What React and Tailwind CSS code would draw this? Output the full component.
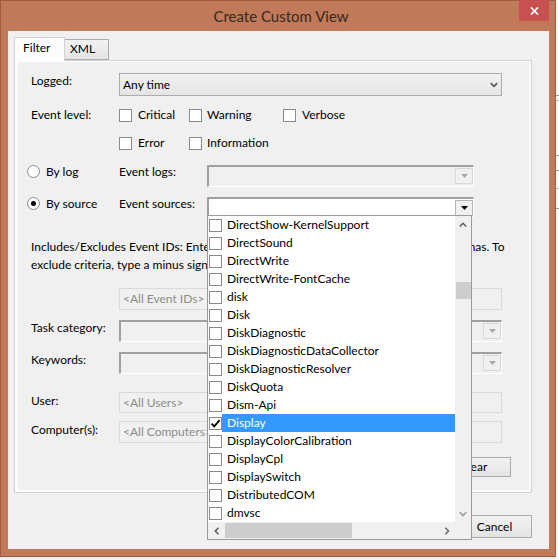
import React from "react";

const ITEMS = [
  "DirectShow-KernelSupport",
  "DirectSound",
  "DirectWrite",
  "DirectWrite-FontCache",
  "disk",
  "Disk",
  "DiskDiagnostic",
  "DiskDiagnosticDataCollector",
  "DiskDiagnosticResolver",
  "DiskQuota",
  "Dism-Api",
  "Display",
  "DisplayColorCalibration",
  "DisplayCpl",
  "DisplaySwitch",
  "DistributedCOM",
  "dmvsc",
];

function Check({ checked }) {
  return (
    <span className="flex h-[13px] w-[13px] shrink-0 items-center justify-center border border-[#8a8a8a] bg-white">
      {checked && (
        <svg width="11" height="11" viewBox="0 0 11 11">
          <path d="M1.6 5.6 L4.2 8.4 L9.6 2.2" fill="none" stroke="#000" strokeWidth="1.9" />
        </svg>
      )}
    </span>
  );
}

function Radio({ on }) {
  return (
    <span className="mt-[1px] flex h-[13px] w-[13px] shrink-0 items-center justify-center rounded-full border border-[#8a8a8a] bg-white">
      {on && <span className="h-[5px] w-[5px] rounded-full bg-black" />}
    </span>
  );
}

function Tri({ dark }) {
  return (
    <svg width="7" height="4" viewBox="0 0 7 4">
      <path d="M0 0H7L3.5 4Z" fill={dark ? "#000" : "#a8a8a8"} />
    </svg>
  );
}

function Label({ children }) {
  return <div className="w-[88px] shrink-0 leading-[16px]">{children}</div>;
}

function Sunken({ white, dark, width, height }) {
  return (
    <div
      className={
        "flex shrink-0 items-start justify-end border-b border-l-2 border-r border-t-2 border-b-white border-l-[#a0a0a0] border-r-white border-t-[#a0a0a0] pt-[1px] " +
        (white ? "bg-white" : "bg-[#f0f0f0]")
      }
      style={{ width, height }}
    >
      <div
        className={
          "flex h-[16px] w-[18px] items-center justify-center border bg-[#f0f0f0] " +
          (dark ? "border-[#b5b5b5]" : "border-[#d8d8d8]")
        }
      >
        <Tri dark={dark} />
      </div>
    </div>
  );
}

function TextBox({ text, height }) {
  return (
    <div
      className="flex w-[383px] shrink-0 items-center border border-[#d9d9d9] bg-[#f0f0f0] pl-[3px] text-[#8c8c8c]"
      style={{ height }}
    >
      {text}
    </div>
  );
}

function Button({ children, h }) {
  return (
    <div
      className="flex w-[75px] shrink-0 items-center justify-center border border-[#acacac] bg-linear-to-b from-[#f2f2f2] to-[#e4e4e4]"
      style={{ height: h }}
    >
      {children}
    </div>
  );
}

function Chevron({ dir, color }) {
  const d = {
    up: "M0.8 4.5 L4 1.3 L7.2 4.5",
    down: "M0.8 1.3 L4 4.5 L7.2 1.3",
    left: "M4.5 0.8 L1.3 4 L4.5 7.2",
    right: "M1.3 0.8 L4.5 4 L1.3 7.2",
  }[dir];
  const vert = dir === "up" || dir === "down";
  return (
    <svg width={vert ? 8 : 6} height={vert ? 6 : 8} viewBox={vert ? "0 0 8 6" : "0 0 6 8"}>
      <path d={d} fill="none" stroke={color} strokeWidth="1.6" />
    </svg>
  );
}

function SourceList() {
  return (
    <div className="absolute left-[207px] top-[215px] z-20 flex h-[325px] w-[265px] flex-col border border-[#9a9a9a] bg-white">
      <div className="flex h-[306px]">
        <div className="flex w-[247px] flex-col overflow-hidden">
          {ITEMS.map((t) => {
            const sel = t === "Display";
            return (
              <div key={t} className="flex h-[18px] shrink-0 items-center pl-[1px]">
                <Check checked={sel} />
                <span
                  className={
                    "flex h-full grow items-center whitespace-nowrap pl-[5px] " +
                    (sel ? "bg-[#3399ff] text-white" : "")
                  }
                >
                  {t}
                </span>
              </div>
            );
          })}
        </div>
        <div className="flex w-[16px] flex-col bg-[#f0f0f0]">
          <div className="flex h-[17px] items-center justify-center">
            <Chevron dir="up" color="#606060" />
          </div>
          <div className="h-[49px]" />
          <div className="ml-[1px] h-[17px] w-[15px] bg-[#cdcdcd]" />
          <div className="grow" />
          <div className="flex h-[17px] items-center justify-center">
            <Chevron dir="down" color="#9c9c9c" />
          </div>
        </div>
      </div>
      <div className="flex h-[17px]">
        <div className="flex w-[247px] items-center bg-[#f0f0f0]">
          <div className="flex h-full w-[17px] items-center justify-center">
            <Chevron dir="left" color="#606060" />
          </div>
          <div className="h-[15px] w-[127px] bg-[#cdcdcd]" />
          <div className="grow" />
          <div className="flex h-full w-[17px] items-center justify-center">
            <Chevron dir="right" color="#707070" />
          </div>
        </div>
        <div className="w-[16px] bg-[#f0f0f0]" />
      </div>
    </div>
  );
}

export default function App() {
  return (
    <div className="relative flex h-[560px] w-[559px] bg-[#f2f2f2] font-['Lato',sans-serif] text-[12px] text-black">
      <div className="relative flex h-[557px] w-[556px] shrink-0 flex-col border border-[#9c5d42] bg-[#c07a5a]">
        <div className="flex h-[30px] shrink-0 items-center justify-center pl-[6px] text-[15px] text-[#3a2820]">
          Create Custom View
        </div>
        <div className="absolute right-[6px] top-[-1px] flex h-[21px] w-[30px] items-center justify-center bg-[#c75050]">
          <svg width="9" height="8" viewBox="0 0 9 8">
            <path d="M1 0.5 L8 7.5 M8 0.5 L1 7.5" stroke="#fff" strokeWidth="1.7" />
          </svg>
        </div>

        <div className="ml-[7px] flex h-[518px] w-[541px] shrink-0 flex-col bg-[#f0f0f0]">
          {/* tabs */}
          <div className="relative z-10 mb-[-1px] ml-[6px] mt-[6px] flex h-[24px] items-end">
            <div className="h-[24px] w-[51px] border border-b-0 border-[#d2d2d2] bg-[#fcfcfc] pl-[8px] pt-[2px] leading-[16px]">
              Filter
            </div>
            <div className="mb-[1px] h-[21px] w-[44px] border border-l-0 border-[#acacac] bg-linear-to-b from-[#f2f2f2] to-[#e4e4e4] pl-[5px] pt-[1px] leading-[16px]">
              XML
            </div>
          </div>

          {/* panel */}
          <div className="ml-[6px] h-[433px] w-[518px] shrink-0 border border-[#d2d2d2] bg-[#fcfcfc]">
            <div className="ml-[3px] mt-[1px] flex h-[428px] w-[511px] flex-col bg-[#f0f0f0]">
              <div className="mt-[11px] flex h-[23px] pl-[13px]">
                <Label>Logged:</Label>
                <div className="flex h-[23px] w-[383px] items-center justify-between border border-[#acacac] bg-linear-to-b from-[#f2f2f2] to-[#e4e4e4] pl-[3px] pr-[3px]">
                  <span>Any time</span>
                  <svg width="8" height="6" viewBox="0 0 8 6">
                    <path d="M0.8 1.2 L4 4.4 L7.2 1.2" fill="none" stroke="#5a5a5a" strokeWidth="1.7" />
                  </svg>
                </div>
              </div>

              <div className="mt-[11px] flex h-[16px] items-center pl-[13px]">
                <Label>Event level:</Label>
                <div className="flex w-[70px] items-center">
                  <Check />
                  <span className="ml-[6px]">Critical</span>
                </div>
                <div className="flex w-[94px] items-center">
                  <Check />
                  <span className="ml-[5px]">Warning</span>
                </div>
                <div className="flex items-center">
                  <Check />
                  <span className="ml-[6px]">Verbose</span>
                </div>
              </div>

              <div className="mt-[12px] flex h-[16px] items-center pl-[13px]">
                <div className="w-[88px] shrink-0" />
                <div className="flex w-[70px] items-center">
                  <Check />
                  <span className="ml-[6px]">Error</span>
                </div>
                <div className="flex items-center">
                  <Check />
                  <span className="ml-[5px]">Information</span>
                </div>
              </div>

              <div className="mt-[13px] flex h-[23px] items-start pl-[9px]">
                <div className="flex w-[92px] shrink-0 items-start">
                  <Radio />
                  <span className="ml-[6px] leading-[16px]">By log</span>
                </div>
                <Label>Event logs:</Label>
                <div className="mt-[1px]">
                  <Sunken width={267} height={22} />
                </div>
              </div>

              <div className="mt-[9px] flex h-[21px] items-start pl-[9px]">
                <div className="flex w-[92px] shrink-0 items-start">
                  <Radio on />
                  <span className="ml-[6px] leading-[16px]">By source</span>
                </div>
                <Label>Event sources:</Label>
                <div className="mt-[1px]">
                  <Sunken white dark width={267} height={20} />
                </div>
              </div>

              <div className="mt-[21px] w-[482px] pl-[13px] leading-[18px]">
                <div className="whitespace-nowrap [text-align-last:justify]">
                  Includes/Excludes Event IDs: Enter ID numbers and/or ID ranges separated by commas. To
                </div>
                <div className="whitespace-nowrap">
                  exclude criteria, type a minus sign first. For example 1,3,5-99,-76
                </div>
              </div>

              <div className="mt-[14px] flex pl-[101px]">
                <TextBox text={"<All Event IDs>"} height={22} />
              </div>

              <div className="mt-[10px] flex h-[22px] items-start pl-[13px]">
                <Label>Task category:</Label>
                <Sunken width={383} height={22} />
              </div>

              <div className="mt-[10px] flex h-[22px] items-start pl-[13px]">
                <Label>Keywords:</Label>
                <Sunken width={383} height={22} />
              </div>

              <div className="mt-[18px] flex h-[21px] items-start pl-[13px]">
                <div className="w-[88px] shrink-0 pt-[1px] leading-[16px]">User:</div>
                <TextBox text={"<All Users>"} height={21} />
              </div>

              <div className="mt-[8px] flex h-[22px] items-start pl-[13px]">
                <div className="w-[88px] shrink-0 pt-[1px] leading-[16px]">Computer(s):</div>
                <TextBox text={"<All Computers>"} height={22} />
              </div>

              <div className="mt-[14px] flex pl-[418px]">
                <Button h={20}>Clear</Button>
              </div>
            </div>
          </div>

          {/* bottom buttons */}
          <div className="mt-[22px] flex justify-end gap-[6px] pr-[17px]">
            <Button h={23}>OK</Button>
            <Button h={23}>Cancel</Button>
          </div>
        </div>
      </div>

      <div className="flex w-[3px] flex-col bg-[#fafafa]">
        <div className="mt-[95px] h-[1px] bg-[#9a9a9a]" />
        <div className="mt-[4px] h-[1px] bg-[#c0c0c0]" />
        <div className="mt-[54px] h-[1px] bg-[#9a9a9a]" />
        <div className="mt-[14px] h-[1px] bg-[#9a9a9a]" />
        <div className="mt-[17px] h-[1px] bg-[#c0c0c0]" />
        <div className="mt-[19px] h-[1px] bg-[#9a9a9a]" />
      </div>

      <SourceList />
    </div>
  );
}
